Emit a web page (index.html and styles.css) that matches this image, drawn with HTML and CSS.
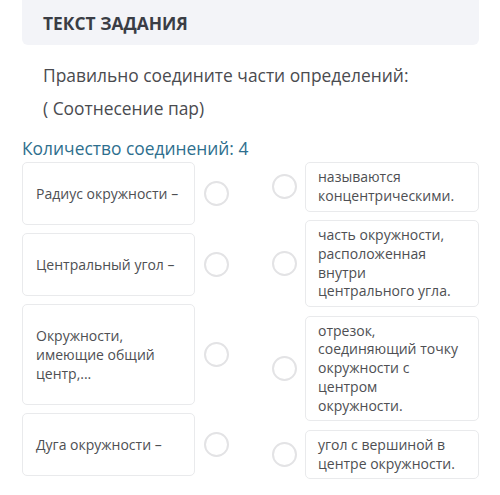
FILE: index.html
```html
<!DOCTYPE html>
<html lang="ru">
<head>
<meta charset="utf-8">
<link rel="stylesheet" href="styles.css">
</head>
<body>
<div class="header">ТЕКСТ ЗАДАНИЯ</div>
<div class="task">
  <div>Правильно соедините части определений:</div>
  <div>( Соотнесение пар)</div>
</div>
<div class="count">Количество соединений: 4</div>
<div class="board">
  <div class="col">
    <div class="item"><div class="card left">Радиус окружности –</div><span class="dot"></span></div>
    <div class="item"><div class="card left">Центральный угол –</div><span class="dot"></span></div>
    <div class="item"><div class="card left">Окружности, имеющие общий центр,...</div><span class="dot"></span></div>
    <div class="item"><div class="card left">Дуга окружности –</div><span class="dot"></span></div>
  </div>
  <div class="col right-col">
    <div class="item"><span class="dot"></span><div class="card right">называются концентрическими.</div></div>
    <div class="item"><span class="dot"></span><div class="card right">часть окружности, расположенная внутри центрального угла.</div></div>
    <div class="item"><span class="dot"></span><div class="card right">отрезок, соединяющий точку окружности с центром окружности.</div></div>
    <div class="item"><span class="dot"></span><div class="card right">угол с вершиной в центре окружности.</div></div>
  </div>
</div>
</body>
</html>
```
FILE: styles.css
```css
* { box-sizing: border-box; }
body {
  margin: 0;
  background: #fff;
  font-family: "Open Sans", "Noto Sans", sans-serif;
  color: #4a4b4f;
}
.header {
  margin: 0 21px 0 22px;
  height: 45px;
  padding: 11px 21px 0;
  background: #f3f4f8;
  border-radius: 0 0 6px 6px;
  font-weight: 700;
  font-size: 17.4px;
  color: #3a3d45;
}
.task {
  margin-top: 14px;
  padding-left: 43px;
  font-size: 17.4px;
  line-height: 33px;
  color: #4a4b4f;
}
.count {
  margin-top: 12px;
  padding-left: 22px;
  font-size: 17.4px;
  line-height: 23px;
  color: #2e6f8e;
}
.board {
  display: flex;
  justify-content: space-between;
  padding: 2px 21px 0 22px;
}
.col {
  display: flex;
  flex-direction: column;
  gap: 8px;
}
.right-col { gap: 8.5px; }
.item {
  display: flex;
  align-items: center;
  gap: 8.5px;
}
.card {
  border: 1px solid #e9eaec;
  border-radius: 5px;
  background: #fff;
  font-size: 14px;
  color: #4e4f53;
}
.card.left {
  width: 173px;
  padding: 21px 13px;
  line-height: 19px;
}
.card.right {
  width: 174px;
  padding: 5px 16px 5px 12px;
  line-height: 18.75px;
}
.dot {
  flex: none;
  width: 25px;
  height: 25px;
  border: 2px solid #e3e3e5;
  border-radius: 50%;
  background: #fff;
}
```
